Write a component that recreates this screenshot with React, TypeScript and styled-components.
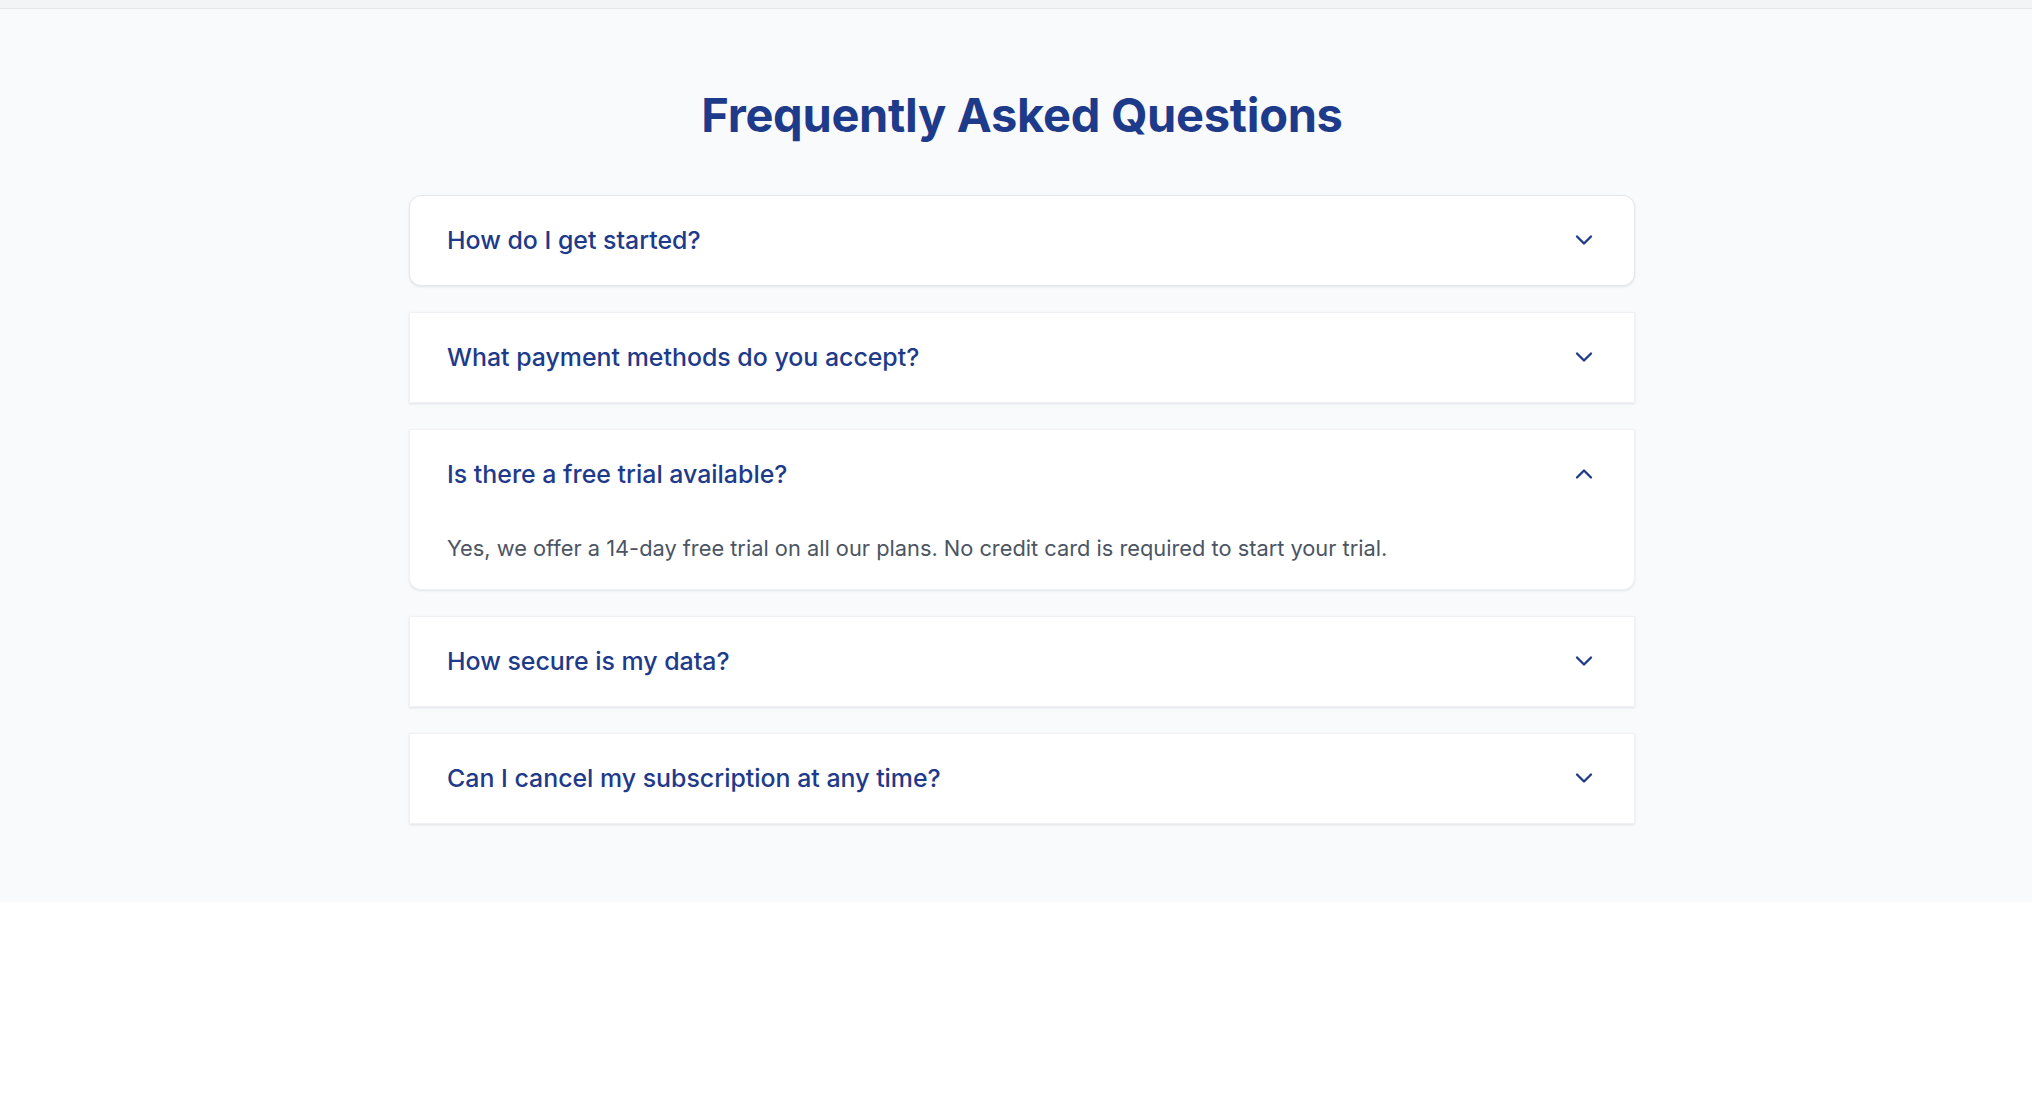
import React, { useState } from 'react'
import styled, { createGlobalStyle } from 'styled-components'
import { ChevronDown, ChevronUp } from 'lucide-react'

const GlobalStyle = createGlobalStyle`
  html, body {
    margin: 0;
    padding: 0;
    background: #ffffff;
    font-family: Inter, "Noto Sans", "Liberation Sans", sans-serif;
  }
  * {
    box-sizing: border-box;
  }
`

const TopBar = styled.div`
  height: 9px;
  background: #f3f4f6;
  border-bottom: 1px solid #e5e7eb;
`

const Section = styled.section`
  background: #f9fafb;
  padding: 82px 0 78px 12px;
`

const Title = styled.h2`
  margin: 0 0 56px;
  text-align: center;
  font-size: 47px;
  line-height: 48px;
  font-weight: 700;
  color: #1e3a8a;
  letter-spacing: -0.3px;
`

const List = styled.div`
  width: 1226px;
  margin: 0 auto;
  display: flex;
  flex-direction: column;
  gap: 26px;
`

const Item = styled.div<{ $shape: 'full' | 'bottom' | 'none'; $outlined?: boolean }>`
  background: #ffffff;
  border: 1px solid ${({ $outlined }) => ($outlined ? '#e5e7eb' : '#f0f1f4')};
  border-radius: ${({ $shape }) =>
    $shape === 'full' ? '12px' : $shape === 'bottom' ? '0 0 12px 12px' : '0'};
  box-shadow: 0 1px 3px rgba(17, 24, 39, 0.06), 0 1px 2px rgba(17, 24, 39, 0.04);
`

const Question = styled.button`
  width: 100%;
  display: flex;
  align-items: center;
  justify-content: space-between;
  padding: 0 36px 1px 37px;
  height: 89px;
  background: transparent;
  border: 0;
  cursor: pointer;
  font-family: inherit;
  font-size: 24.9px;
  font-weight: 500;
  color: #1e3a8a;
  text-align: left;

  svg {
    flex-shrink: 0;
    color: #1e3a8a;
  }
`

const Answer = styled.p`
  margin: 0;
  padding: 14px 37px 25px;
  font-size: 21.8px;
  line-height: 31px;
  color: #4b5563;
`

const faqs = [
  {
    q: 'How do I get started?',
    a: 'Simply sign up for an account, choose a plan that fits your needs, and follow the onboarding steps.',
  },
  {
    q: 'What payment methods do you accept?',
    a: 'We accept all major credit cards, PayPal, and bank transfers.',
  },
  {
    q: 'Is there a free trial available?',
    a: 'Yes, we offer a 14-day free trial on all our plans. No credit card is required to start your trial.',
  },
  {
    q: 'How secure is my data?',
    a: 'Your data is encrypted in transit and at rest, and we follow industry best practices.',
  },
  {
    q: 'Can I cancel my subscription at any time?',
    a: 'Yes, you can cancel your subscription at any time from your account settings.',
  },
]

const App = () => {
  const [open, setOpen] = useState<number | null>(2)

  return (
    <>
      <GlobalStyle />
      <TopBar />
      <Section>
        <Title>Frequently Asked Questions</Title>
        <List>
          {faqs.map((item, i) => {
            const isOpen = open === i
            const shape = i === 0 ? 'full' : isOpen ? 'bottom' : 'none'
            return (
              <Item key={item.q} $shape={shape} $outlined={i === 0}>
                <Question onClick={() => setOpen(isOpen ? null : i)}>
                  {item.q}
                  {isOpen ? <ChevronUp size={28} strokeWidth={2} /> : <ChevronDown size={28} strokeWidth={2} />}
                </Question>
                {isOpen && <Answer>{item.a}</Answer>}
              </Item>
            )
          })}
        </List>
      </Section>
    </>
  )
}

export default App
